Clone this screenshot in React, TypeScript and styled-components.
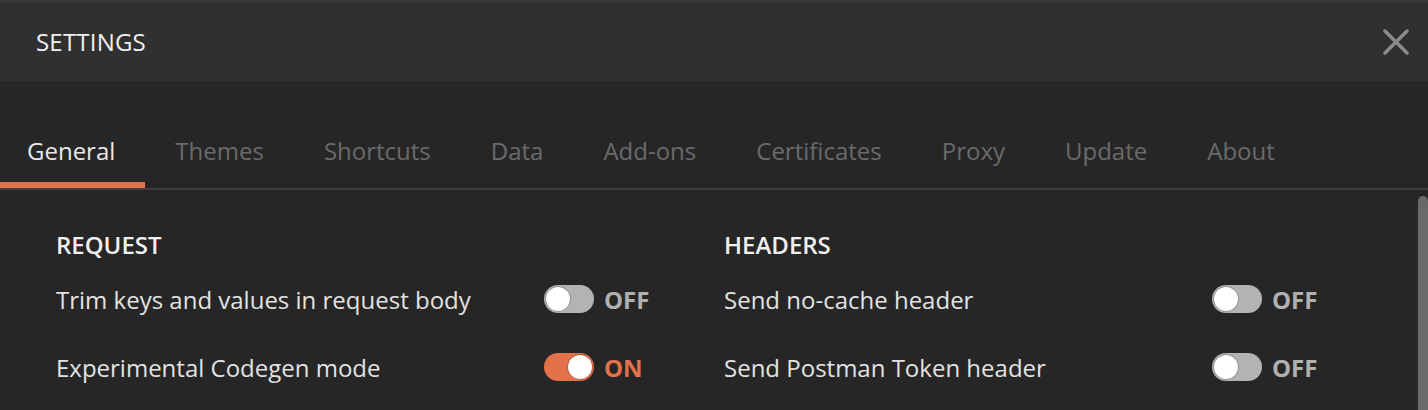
import React from 'react';
import styled, { createGlobalStyle } from 'styled-components';

interface SettingRow {
  label: string;
  on: boolean;
}

interface Section {
  title: string;
  rows: Array<SettingRow>;
}

const tabs = [
  'General',
  'Themes',
  'Shortcuts',
  'Data',
  'Add-ons',
  'Certificates',
  'Proxy',
  'Update',
  'About',
];

const sections: Array<Section> = [
  {
    title: 'REQUEST',
    rows: [
      { label: 'Trim keys and values in request body', on: false },
      { label: 'Experimental Codegen mode', on: true },
    ],
  },
  {
    title: 'HEADERS',
    rows: [
      { label: 'Send no-cache header', on: false },
      { label: 'Send Postman Token header', on: false },
    ],
  },
];

const App = () => {
  return (
    <>
      <GlobalStyle />
      <Modal>
        <Header>
          <Title>SETTINGS</Title>
          <CloseButton aria-label="close">
            <svg width="26" height="26" viewBox="0 0 26 26">
              <path
                d="M2 2 L24 24 M24 2 L2 24"
                stroke="#8c8c8c"
                strokeWidth="3.4"
                strokeLinecap="round"
              />
            </svg>
          </CloseButton>
        </Header>
        <TabBar>
          {tabs.map((tab, index) => (
            <Tab key={tab} active={index === 0}>
              {tab}
            </Tab>
          ))}
        </TabBar>
        <Body>
          <Content>
            {sections.map((section) => (
              <Column key={section.title}>
                <SectionTitle>{section.title}</SectionTitle>
                {section.rows.map((row) => (
                  <Row key={row.label}>
                    <Label>{row.label}</Label>
                    <Switch on={row.on}>
                      <Knob on={row.on} />
                    </Switch>
                    <SwitchText on={row.on}>{row.on ? 'ON' : 'OFF'}</SwitchText>
                  </Row>
                ))}
              </Column>
            ))}
          </Content>
          <ScrollThumb />
        </Body>
      </Modal>
    </>
  );
};

export default App;

const GlobalStyle = createGlobalStyle`
  html, body {
    margin: 0;
    padding: 0;
    background: #262626;
  }
  body {
    font-family: "Open Sans", "Noto Sans", sans-serif;
    -webkit-font-smoothing: antialiased;
  }
`;

const Modal = styled.div`
  width: 1428px;
  height: 410px;
  overflow: hidden;
  background: #262626;
  display: flex;
  flex-direction: column;
`;

const Header = styled.div`
  height: 79px;
  border-top: 2px solid #393939;
  background: #303030;
  display: flex;
  align-items: center;
  justify-content: space-between;
  padding: 0 19px 0 36px;
  flex-shrink: 0;
`;

const Title = styled.div`
  font-size: 24px;
  line-height: 32px;
  color: #f0f0f0;
  letter-spacing: 0.2px;
`;

const CloseButton = styled.div`
  width: 26px;
  height: 26px;
  display: flex;
  margin-top: 1px;
  cursor: pointer;
`;

const TabBar = styled.div`
  display: flex;
  padding-top: 39px;
  border-bottom: 2px solid #3d3d3d;
  flex-shrink: 0;
`;

const Tab = styled.div<{ active?: boolean }>`
  height: 62px;
  line-height: 62px;
  padding: 0 30px 0 27px;
  margin-right: 3px;
  font-size: 24px;
  color: ${({ active }) => (active ? '#e8e8e8' : '#6a6a6a')};
  border-bottom: 6px solid ${({ active }) => (active ? '#e3714a' : 'transparent')};
  cursor: pointer;
`;

const Body = styled.div`
  flex: 1;
  display: flex;
`;

const Content = styled.div`
  flex: 1;
  display: grid;
  grid-template-columns: 668px 1fr;
  padding: 39px 0 0 56px;
`;

const Column = styled.div`
  display: flex;
  flex-direction: column;
`;

const SectionTitle = styled.div`
  font-size: 24px;
  line-height: 32px;
  font-weight: 600;
  color: #f0f0f0;
  margin-bottom: 4px;
`;

const Row = styled.div`
  height: 68px;
  display: flex;
  align-items: center;
`;

const Label = styled.div`
  width: 488px;
  font-size: 24px;
  color: #e2e2e2;
`;

const Switch = styled.div<{ on: boolean }>`
  position: relative;
  width: 50px;
  height: 28px;
  border-radius: 14px;
  background: ${({ on }) => (on ? '#e3714a' : '#b3b3b3')};
  flex-shrink: 0;
`;

const Knob = styled.div<{ on: boolean }>`
  position: absolute;
  top: 2px;
  left: ${({ on }) => (on ? '24px' : '2px')};
  width: 24px;
  height: 24px;
  border-radius: 50%;
  background: #ffffff;
  box-shadow: 0 0 1px 0.5px rgba(0, 0, 0, 0.35);
`;

const SwitchText = styled.div<{ on: boolean }>`
  margin-left: 10px;
  font-size: 24px;
  font-weight: 700;
  color: ${({ on }) => (on ? '#e3714a' : '#b0b0b0')};
`;

const ScrollThumb = styled.div`
  width: 10px;
  margin-top: 6px;
  border-radius: 5px 5px 0 0;
  background: #6a6a6a;
  flex-shrink: 0;
`;
